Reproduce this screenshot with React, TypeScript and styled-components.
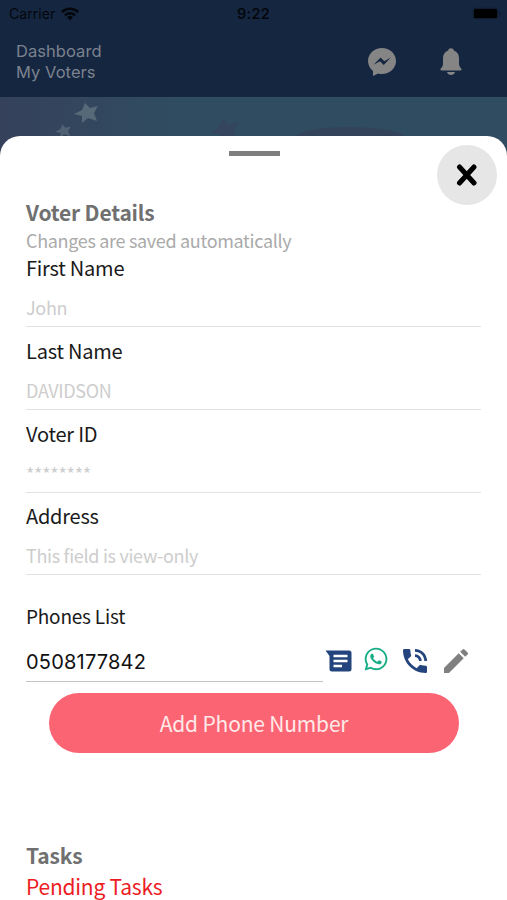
import React from "react";
import styled, { createGlobalStyle } from "styled-components";
import { MdPhoneInTalk, MdEdit } from "react-icons/md";
import { FaWhatsapp } from "react-icons/fa";

const GlobalStyle = createGlobalStyle`
  * { box-sizing: border-box; }
  body { margin: 0; background: #fff; overflow: hidden; font-family: "Noto Sans CJK JP", "Open Sans", sans-serif; }
`;

const Screen = styled.div`
  width: 507px;
  height: 900px;
  overflow: hidden;
  background: linear-gradient(90deg, #35415a 0, #304c60 34%, #304c60 100%);
`;

const Header = styled.header`
  height: 97px;
  background: #152641;
  font-family: Inter, sans-serif;
`;

const StatusBar = styled.div`
  display: grid;
  grid-template-columns: 1fr auto 1fr;
  align-items: center;
  height: 28px;
  padding: 0 5px 0 9px;
  color: #04070c;
  font-size: 14px;
  line-height: 28px;
`;

const Carrier = styled.div`
  display: flex;
  align-items: center;
  gap: 6px;
  letter-spacing: 0.05px;
`;

const Clock = styled.div`
  margin-left: -4px;
  font-size: 14.5px;
  font-weight: 600;
  letter-spacing: 0.25px;
`;

const Battery = styled.svg`
  justify-self: end;
  display: block;
`;

const NavBar = styled.div`
  display: flex;
  justify-content: space-between;
  height: 69px;
  padding: 12px 42px 0 16px;
`;

const NavTitle = styled.div`
  padding-top: 1px;
  color: #7b828e;
  font-size: 16.5px;
  line-height: 21px;
  letter-spacing: 0.05px;
`;

const NavActions = styled.div`
  display: flex;
  gap: 41px;
  padding-top: 8px;
  color: #858585;
`;

const Banner = styled.svg`
  display: block;
  width: 507px;
  height: 39px;
`;

const Sheet = styled.main`
  height: 764px;
  border-radius: 20px 20px 0 0;
  background: #fff;
  overflow: hidden;
`;

const SheetTop = styled.div`
  display: grid;
  grid-template-columns: 1fr 51px 1fr;
  height: 62px;
  padding: 9px 10px 0 11px;
`;

const Handle = styled.div`
  grid-column: 2;
  height: 5px;
  margin-top: 6px;
  background: #7f7f7f;
`;

const CloseButton = styled.button`
  justify-self: end;
  display: grid;
  place-items: center;
  width: 60px;
  height: 60px;
  padding: 0;
  border: 0;
  border-radius: 50%;
  background: #e6e6e6;
`;

const Content = styled.div`
  padding: 0 26px;
`;

const SectionTitle = styled.h2`
  margin: 0;
  color: #707070;
  font-size: 21px;
  font-weight: 700;
  line-height: 29px;
  letter-spacing: -0.18px;
`;

const Hint = styled.div`
  color: #aaa;
  font-size: 18px;
  line-height: 27px;
  letter-spacing: -0.32px;
`;

const Field = styled.div`
  height: 82.8px;
  display: flex;
  flex-direction: column;
`;

const Label = styled.div<{ $compact?: boolean }>`
  color: #1a1a1a;
  font-size: ${(p) => (p.$compact ? 19 : 20)}px;
  line-height: 28px;
  letter-spacing: ${(p) => (p.$compact ? -0.22 : -0.22)}px;
`;

const Value = styled.div`
  height: 45px;
  border-bottom: 1px solid #e2e2e2;
  color: #cdcdcd;
  font-size: 18px;
  line-height: 51px;
  letter-spacing: -0.3px;
`;

const Phones = styled.section`
  padding-top: 17px;
`;

const PhoneRow = styled.div`
  display: flex;
  height: 52px;
`;

const PhoneNumber = styled.div`
  width: 297px;
  border-bottom: 1px solid #c4c4c4;
  color: #111;
  font-family: Inter, sans-serif;
  font-size: 20px;
  line-height: 65px;
  letter-spacing: 0.2px;
`;

const PhoneActions = styled.div`
  display: flex;
  align-items: center;
  padding: 10px 0 0 2px;
`;

const Action = styled.button<{ $color?: string; $gap?: number; $lift?: number }>`
  display: flex;
  margin: 0 0 ${(p) => p.$lift ?? 0}px ${(p) => p.$gap ?? 0}px;
  padding: 0;
  border: 0;
  background: none;
  color: ${(p) => p.$color ?? "#23447c"};
`;

const AddButton = styled.button`
  display: block;
  width: 410px;
  height: 60px;
  margin: 11px 0 0 23px;
  padding: 0;
  border: 0;
  border-radius: 30px;
  background: #fb6472;
  color: #ffe9e9;
  font-family: inherit;
  font-size: 21px;
  line-height: 60px;
  letter-spacing: -0.18px;
`;

const Tasks = styled.section`
  padding-top: 88px;
`;

const Pending = styled.div`
  color: #ed1c24;
  font-size: 21px;
  line-height: 32px;
  letter-spacing: -0.22px;
`;

const fields = [
  { label: "First Name", value: "John" },
  { label: "Last Name", value: "DAVIDSON" },
  { label: "Voter ID", value: "********" },
  { label: "Address", value: "This field is view-only" },
];

const STAR = "M-1-10 4-5 12-7 8 0 11 8 2 5-4 10-4 3-12 1-4-3Z";

const WifiIcon = () => (
  <svg width="18" height="14" viewBox="0 0 18 14" fill="none" stroke="currentColor" strokeWidth="2.5">
    <path d="M.9 5.1a11.5 11.5 0 0 1 16.2 0M3.9 8.3a7.2 7.2 0 0 1 10.2 0" />
    <path d="M6 10.3a4.3 4.3 0 0 1 6 0L9 13.4Z" fill="currentColor" stroke="none" />
  </svg>
);

const MessengerIcon = () => (
  <svg width="28" height="28" viewBox="0 0 28 28">
    <path
      d="M14 0C6.2 0 0 5.7 0 13c0 3.900 1.900 7.500 5 10v5l5-2.500c1.300.4 2.600.5 4 .5 7.800 0 14-5.700 14-13S21.800 0 14 0Z"
      fill="currentColor"
    />
    <path d="M5.5 16.8 12.6 9.5 16.3 13.2 22.8 9.500 15.700 17 12 13.300Z" fill="#152641" />
  </svg>
);

const BellIcon = () => (
  <svg width="28" height="28" viewBox="0 0 28 28" fill="currentColor">
    <path d="M14 .3c-1.500 0-2.500.8-2.900 2.200C7.700 3.700 6 6.500 6 10v5.500c0 2.200-.8 3.600-2.200 5-.9 1-.2 2 1 2h18.400c1.200 0 1.900-1 1-2-1.400-1.400-2.200-2.800-2.200-5V10c0-3.500-1.700-6.300-5.100-7.500C16.500 1.100 15.500.3 14 .3Z" />
    <path d="M10 24h8c-.5 2-2 3-4 3s-3.500-1-4-3Z" />
  </svg>
);

export default function App() {
  return (
    <>
      <GlobalStyle />
      <Screen>
        <Header>
          <StatusBar>
            <Carrier>
              Carrier
              <WifiIcon />
            </Carrier>
            <Clock>9:22</Clock>
            <Battery width="30" height="14" viewBox="0 0 30 14">
              <rect x="0.7" y="0.7" width="25.5" height="11.6" rx="3" fill="#101d31" />
              <rect x="2" y="2" width="23" height="9" rx="1.5" fill="#000" />
              <path d="M27.5 4.5q2 2 0 4z" fill="#0b1422" />
            </Battery>
          </StatusBar>
          <NavBar>
            <NavTitle>
              Dashboard
              <br />
              My Voters
            </NavTitle>
            <NavActions>
              <MessengerIcon />
              <BellIcon />
            </NavActions>
          </NavBar>
        </Header>
        <Banner viewBox="0 0 507 39">
          <path d={STAR} fill="#566978" transform="translate(86 16)" />
          <path d={STAR} fill="#4f6172" transform="translate(63 34) scale(.65)" />
          <path d={STAR} fill="#36455e" transform="translate(224 34) scale(1.2)" />
          <ellipse cx="350" cy="41" rx="55" ry="11" fill="#344158" opacity=".75" />
        </Banner>
        <Sheet>
          <SheetTop>
            <Handle />
            <CloseButton aria-label="Close">
              <svg width="22" height="24" viewBox="0 0 22 24">
                <path d="M3.5 4 18 20M18 4 3.5 20" stroke="#000" strokeWidth="5" strokeLinecap="round" />
              </svg>
            </CloseButton>
          </SheetTop>
          <Content>
            <SectionTitle>Voter Details</SectionTitle>
            <Hint>Changes are saved automatically</Hint>
            {fields.map((f) => (
              <Field key={f.label}>
                <Label>{f.label}</Label>
                <Value>{f.value}</Value>
              </Field>
            ))}
            <Phones>
              <Label $compact>Phones List</Label>
              <PhoneRow>
                <PhoneNumber>0508177842</PhoneNumber>
                <PhoneActions>
                  <Action aria-label="Message">
                    <svg width="28" height="26" viewBox="0 0 28 26">
                      <path
                        d="M.5 2.5H24a2.5 2.5 0 0 1 2.5 2.5v16A2.5 2.5 0 0 1 24 23.5H7A2.5 2.5 0 0 1 4.5 21V8Z"
                        fill="currentColor"
                      />
                      <path d="M8.5 8H22.5M8.5 13H22.5M8.5 18H17" stroke="#fff" strokeWidth="2.3" />
                    </svg>
                  </Action>
                  <Action aria-label="WhatsApp" $color="#19ad87" $gap={10} $lift={4}>
                    <FaWhatsapp size={26} />
                  </Action>
                  <Action aria-label="Call" $gap={10}>
                    <MdPhoneInTalk size={32} />
                  </Action>
                  <Action aria-label="Edit" $color="#808080" $gap={9}>
                    <MdEdit size={32} />
                  </Action>
                </PhoneActions>
              </PhoneRow>
              <AddButton>Add Phone Number</AddButton>
            </Phones>
            <Tasks>
              <SectionTitle>Tasks</SectionTitle>
              <Pending>Pending Tasks</Pending>
            </Tasks>
          </Content>
        </Sheet>
      </Screen>
    </>
  );
}
